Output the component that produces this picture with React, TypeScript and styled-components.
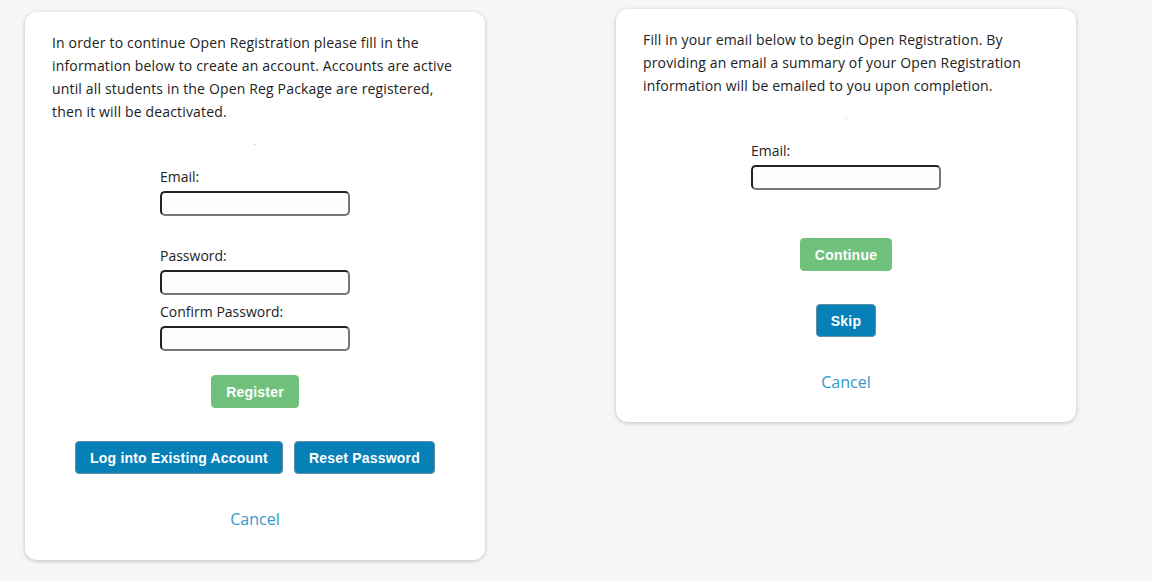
import styled, { createGlobalStyle } from "styled-components";

const GlobalStyle = createGlobalStyle`
    body {
        margin: 0;
        background-color: #f6f6f6;
        font-family: "Open Sans", "Liberation Sans", sans-serif;
    }
`;

const Page = styled.div`
    display: flex;
    align-items: flex-start;
    gap: 131px;
    padding: 9px 25px 20px 25px;
    min-height: 581px;
    box-sizing: border-box;
`;

const Card = styled.div<{ $offset?: number; $bottom: number }>`
    display: flex;
    flex-direction: column;
    width: 460px;
    box-sizing: border-box;
    margin-top: ${(p) => p.$offset ?? 0}px;
    padding: 19px 27px ${(p) => p.$bottom}px 27px;
    background-color: #ffffff;
    border-radius: 12px;
    box-shadow: 0 1px 4px rgba(0, 0, 0, 0.22);
`;

const Intro = styled.p`
    margin: 0;
    font-size: 14px;
    line-height: 23px;
    letter-spacing: 0.16px;
    color: #222222;
`;

const Dot = styled.div`
    margin-top: 17px;
    height: 6px;
    line-height: 6px;
    font-size: 7px;
    text-align: center;
    color: #9a9a9a;
`;

const Form = styled.div<{ $top: number }>`
    display: flex;
    flex-direction: column;
    width: 190px;
    margin: ${(p) => p.$top}px auto 0 auto;
`;

const Label = styled.label<{ $top?: number }>`
    margin-top: ${(p) => p.$top ?? 0}px;
    font-size: 14px;
    line-height: 20px;
    color: #222222;
`;

const Input = styled.input`
    width: 190px;
    height: 25px;
    box-sizing: border-box;
    margin-top: 4px;
    border: 2px solid;
    border-color: #222222 #777777 #777777 #222222;
    border-radius: 5px;
    background-color: #fdfdfd;
    outline: none;
`;

const ButtonRow = styled.div<{ $top: number }>`
    display: flex;
    justify-content: center;
    gap: 11px;
    margin-top: ${(p) => p.$top}px;
`;

const ActionButton = styled.button<{ $variant: "green" | "blue" }>`
    height: 33px;
    padding: 0 14px;
    box-sizing: border-box;
    border: 1px solid ${(p) => (p.$variant === "green" ? "#6fc17c" : "#5f8ea6")};
    border-radius: 4px;
    background-color: ${(p) => (p.$variant === "green" ? "#6fc17c" : "#0780b8")};
    color: #ffffff;
    font-family: "Liberation Sans", Arial, sans-serif;
    font-weight: bold;
    font-size: 14px;
    letter-spacing: 0.2px;
    cursor: pointer;
`;

const CancelLink = styled.a<{ $top: number }>`
    display: block;
    margin-top: ${(p) => p.$top}px;
    text-align: center;
    font-size: 16px;
    line-height: 20px;
    color: #3399cc;
    text-decoration: none;
    cursor: pointer;
`;

export default function App() {
    return (
        <>
            <GlobalStyle />
            <Page>
                <Card $offset={3} $bottom={31}>
                    <Intro>
                        In order to continue Open Registration please fill in the information below to
                        create an account. Accounts are active until all students in the Open Reg
                        Package are registered, then it will be deactivated.
                    </Intro>
                    <Dot>.</Dot>
                    <Form $top={21}>
                        <Label>Email:</Label>
                        <Input type="email" />
                        <Label $top={30}>Password:</Label>
                        <Input type="password" />
                        <Label $top={7}>Confirm Password:</Label>
                        <Input type="password" />
                    </Form>
                    <ButtonRow $top={24}>
                        <ActionButton $variant="green">Register</ActionButton>
                    </ButtonRow>
                    <ButtonRow $top={33}>
                        <ActionButton $variant="blue">Log into Existing Account</ActionButton>
                        <ActionButton $variant="blue">Reset Password</ActionButton>
                    </ButtonRow>
                    <CancelLink $top={35}>Cancel</CancelLink>
                </Card>
                <Card $bottom={30}>
                    <Intro>
                        Fill in your email below to begin Open Registration. By providing an email a
                        summary of your Open Registration information will be emailed to you upon
                        completion.
                    </Intro>
                    <Dot>.</Dot>
                    <Form $top={21}>
                        <Label>Email:</Label>
                        <Input type="email" />
                    </Form>
                    <ButtonRow $top={48}>
                        <ActionButton $variant="green">Continue</ActionButton>
                    </ButtonRow>
                    <ButtonRow $top={33}>
                        <ActionButton $variant="blue">Skip</ActionButton>
                    </ButtonRow>
                    <CancelLink $top={35}>Cancel</CancelLink>
                </Card>
            </Page>
        </>
    );
}
